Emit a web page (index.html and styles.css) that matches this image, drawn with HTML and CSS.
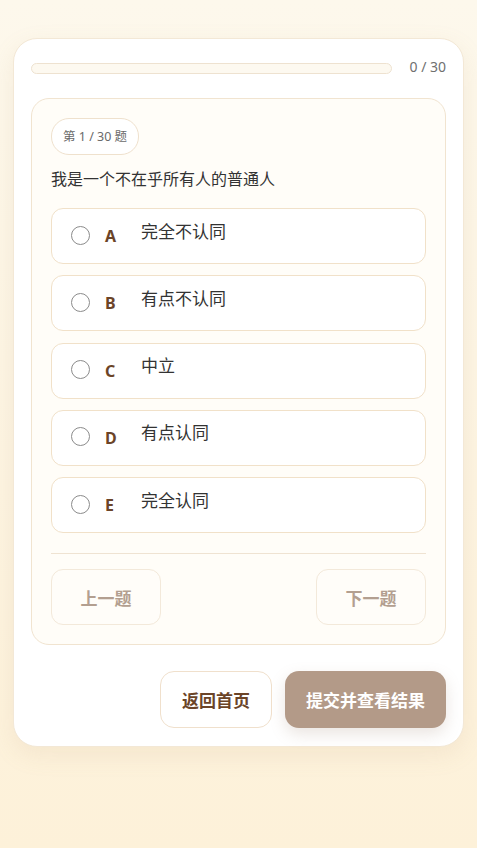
FILE: index.html
```html
<!DOCTYPE html>
<html lang="zh-CN">
<head>
<meta charset="utf-8">
<title>测试</title>
<link rel="stylesheet" href="styles.css">
</head>
<body>
<div class="page">
  <div class="card">
    <div class="progress-row">
      <div class="progress-track"><div class="progress-fill" style="width:0%"></div></div>
      <span class="progress-text">0 / 30</span>
    </div>
    <div class="panel">
      <span class="badge">第 1 / 30 题</span>
      <p class="question">我是一个不在乎所有人的普通人</p>
      <div class="options">
        <label class="option"><span class="radio"></span><span class="letter">A</span><span class="opt-text">完全不认同</span></label>
        <label class="option"><span class="radio"></span><span class="letter">B</span><span class="opt-text">有点不认同</span></label>
        <label class="option"><span class="radio"></span><span class="letter">C</span><span class="opt-text">中立</span></label>
        <label class="option"><span class="radio"></span><span class="letter">D</span><span class="opt-text">有点认同</span></label>
        <label class="option"><span class="radio"></span><span class="letter">E</span><span class="opt-text">完全认同</span></label>
      </div>
      <div class="divider"></div>
      <div class="nav">
        <button class="nav-btn">上一题</button>
        <button class="nav-btn">下一题</button>
      </div>
    </div>
    <div class="actions">
      <button class="btn-home">返回首页</button>
      <button class="btn-submit">提交并查看结果</button>
    </div>
  </div>
</div>
</body>
</html>
```

FILE: styles.css
```css
* { box-sizing: border-box; }
html, body { margin: 0; padding: 0; }
body {
  min-height: 848px;
  background: linear-gradient(180deg, #fdf8ec 0%, #fdf1d9 100%);
  font-family: "Noto Sans", "Noto Sans CJK SC", sans-serif;
  color: #333;
}
.page {
  padding: 38px 13px 0 13px;
}
.card {
  width: 451px;
  background: #fff;
  border: 1px solid #f3e8d6;
  border-radius: 24px;
  padding: 17px 17px 18px 17px;
  box-shadow: 0 8px 24px rgba(180, 150, 110, 0.12);
}
.progress-row {
  display: flex;
  align-items: center;
  gap: 17px;
  height: 22px;
}
.progress-track {
  flex: 1;
  height: 11px;
  border: 1px solid #eee2d0;
  border-radius: 6px;
  background: #fdf9f0;
  overflow: hidden;
  margin-top: 2px;
}
.progress-fill { height: 100%; background: #b39a88; }
.progress-text {
  font-size: 14px;
  color: #707070;
  white-space: nowrap;
  flex: none;
  margin-top: -2px;
}
.panel {
  margin-top: 20px;
  border: 1px solid #f1e4d0;
  border-radius: 18px;
  background: #fffdf8;
  padding: 19px 19px 19px 19px;
}
.badge {
  display: inline-block;
  height: 37px;
  line-height: 35px;
  padding: 0 11px;
  border: 1px solid #efe1cd;
  border-radius: 18px;
  font-size: 12.5px;
  color: #6a6a6a;
  background: #fff;
}
.question {
  margin: 13px 0 18px 0;
  font-size: 16px;
  line-height: 22px;
  color: #333;
}
.options {
  display: flex;
  flex-direction: column;
  gap: 11.25px;
}
.option {
  display: flex;
  align-items: center;
  height: 56px;
  border: 1px solid #f1e1c9;
  border-radius: 12px;
  background: #fff;
  padding: 0 0 0 19px;
}
.radio {
  width: 19px;
  height: 19px;
  border: 1.3px solid #8b8b8b;
  border-radius: 50%;
  flex: none;
  margin-top: -2px;
}
.letter {
  width: 17px;
  margin-left: 15px;
  font-weight: 700;
  font-size: 16px;
  color: #6b4428;
  margin-top: 0;
}
.opt-text {
  margin-left: 19px;
  font-size: 17px;
  color: #333;
  margin-top: -12px;
}
.divider {
  height: 1px;
  background: #efe3d2;
  margin-top: 20px;
}
.nav {
  display: flex;
  justify-content: space-between;
  margin-top: 15px;
}
.nav-btn {
  width: 110px;
  height: 56px;
  border: 1px solid #f3e9da;
  border-radius: 12px;
  background: #fffdf9;
  font-family: inherit;
  font-size: 17px;
  font-weight: 700;
  color: #b39f90;
}
.actions {
  display: flex;
  justify-content: flex-end;
  gap: 13px;
  margin-top: 26px;
}
.btn-home {
  width: 112px;
  height: 57px;
  border: 1px solid #f0e0cc;
  border-radius: 14px;
  background: #fff;
  font-family: inherit;
  font-size: 17px;
  font-weight: 700;
  color: #6b4428;
}
.btn-submit {
  width: 161px;
  height: 57px;
  border: none;
  border-radius: 14px;
  background: #b39a88;
  font-family: inherit;
  font-size: 17px;
  font-weight: 700;
  color: #fff;
  box-shadow: 0 6px 16px rgba(150, 120, 100, 0.2);
}
```
